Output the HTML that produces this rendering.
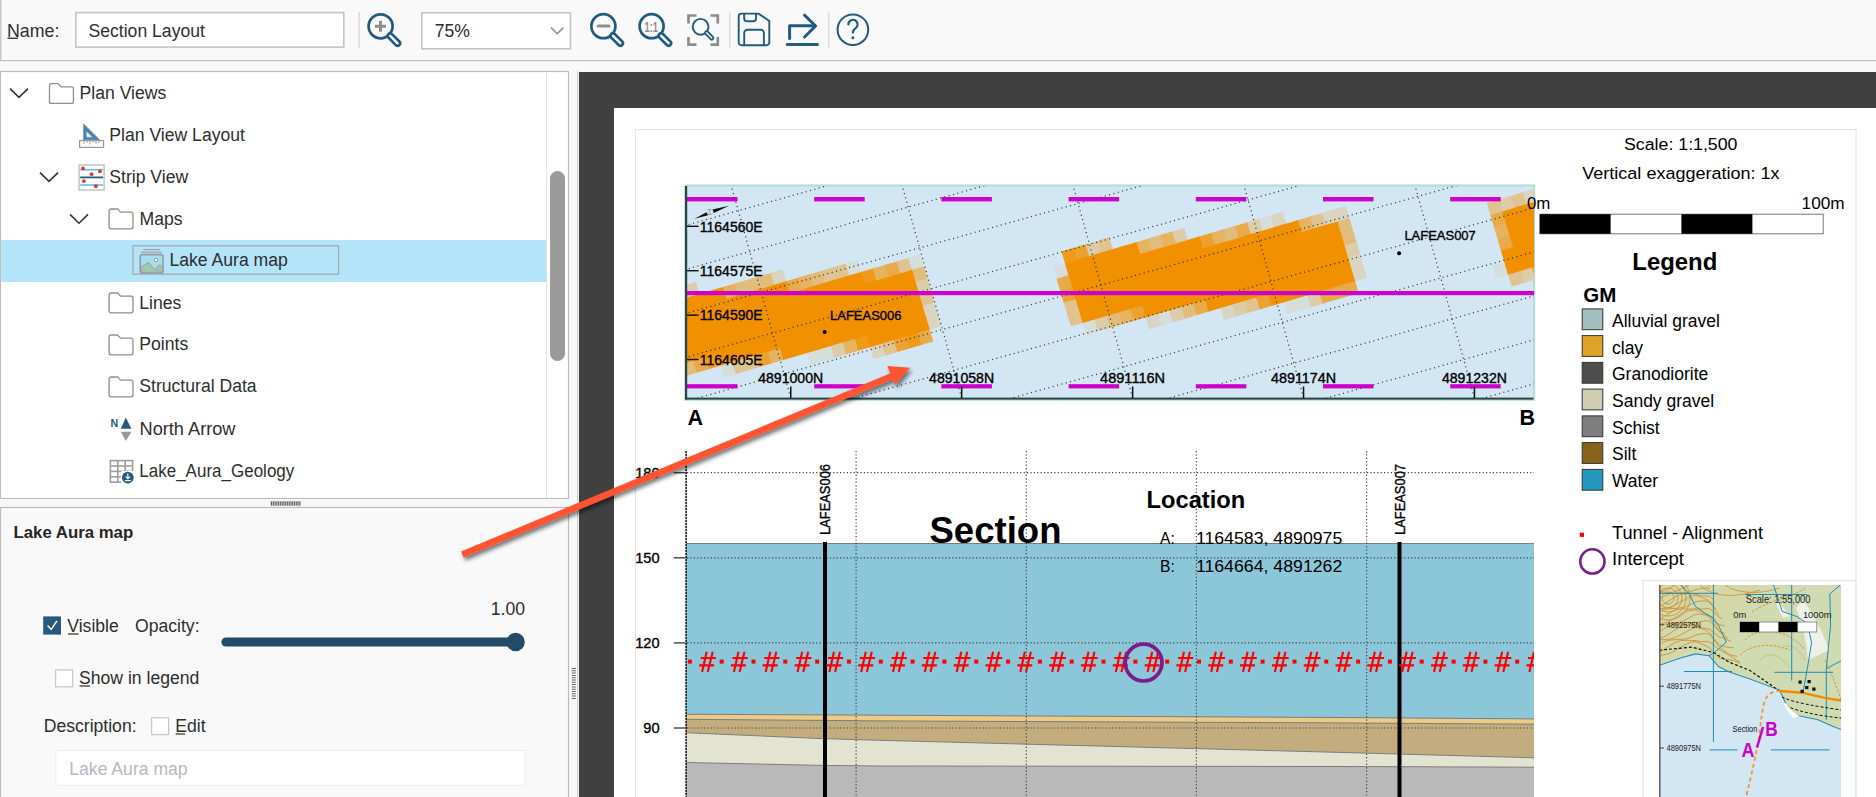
<!DOCTYPE html>
<html><head><meta charset="utf-8">
<style>
html,body{margin:0;padding:0;width:1876px;height:797px;overflow:hidden;background:#f9f9f9;}
svg{display:block;font-family:"Liberation Sans",sans-serif;}
.ui{fill:#2e2e2e;font-size:17.6px;}
.mp{fill:#000;}
.mpb{fill:#000;stroke:#000;stroke-width:0.35px;}
</style></head><body>
<svg width="1876" height="797" viewBox="0 0 1876 797">
<defs>
  <clipPath id="stripclip"><rect x="686" y="186" width="848" height="212"/></clipPath>
  <clipPath id="secclip"><rect x="686" y="451" width="848" height="346"/></clipPath>
  <clipPath id="miniclip"><rect x="1659" y="585" width="182" height="212"/></clipPath>
  <filter id="ashadow" x="-10%" y="-30%" width="130%" height="180%">
    <feGaussianBlur in="SourceAlpha" stdDeviation="2.2"/>
    <feOffset dx="2" dy="3" result="b"/>
    <feComponentTransfer><feFuncA type="linear" slope="0.55"/></feComponentTransfer>
    <feMerge><feMergeNode/><feMergeNode in="SourceGraphic"/></feMerge>
  </filter>
</defs>

<!-- ================= TOOLBAR ================= -->
<rect x="0" y="0" width="1876" height="60" fill="#f9f9f9"/>
<rect x="0" y="60" width="1876" height="1.5" fill="#c4c4c4"/>
<rect x="0" y="0" width="1.5" height="60" fill="#c8c8c8"/>
<!-- gap -->
<rect x="0" y="61.5" width="1876" height="10" fill="#f9f9f9"/>
<text x="7" y="36.5" class="ui" style="font-size:17.8px">Name:</text>
<rect x="7.5" y="37.6" width="10.5" height="1.3" fill="#2e2e2e"/>
<rect x="75.8" y="12.6" width="268" height="34.5" fill="#fff" stroke="#c4c4c4" stroke-width="1.6"/>
<text x="88.5" y="37.2" class="ui" style="font-size:17.6px">Section Layout</text>
<rect x="358.3" y="12.2" width="1.6" height="35.4" fill="#dadada"/>
<g fill="none" stroke="#215b7f" stroke-width="2.7">
  <!-- zoom in -->
  <circle cx="380.6" cy="26.3" r="12"/>
  <line x1="390.2" y1="35.9" x2="397.6" y2="43.3" stroke-width="7.6" stroke-linecap="round"/>
  <line x1="390.2" y1="35.9" x2="397.6" y2="43.3" stroke="#f9f9f9" stroke-width="2.4" stroke-linecap="round"/>
  <!-- zoom out -->
  <circle cx="603.4" cy="26.2" r="12"/>
  <line x1="613" y1="35.8" x2="620.4" y2="43.2" stroke-width="7.6" stroke-linecap="round"/>
  <line x1="613" y1="35.8" x2="620.4" y2="43.2" stroke="#f9f9f9" stroke-width="2.4" stroke-linecap="round"/>
  <!-- 1:1 -->
  <circle cx="651.6" cy="26.2" r="12"/>
  <line x1="661.2" y1="35.8" x2="668.6" y2="43.2" stroke-width="7.6" stroke-linecap="round"/>
  <line x1="661.2" y1="35.8" x2="668.6" y2="43.2" stroke="#f9f9f9" stroke-width="2.4" stroke-linecap="round"/>
  <!-- fit small -->
  <circle cx="700.6" cy="26.8" r="7.9" stroke-width="1.9"/>
  <line x1="706.6" y1="32.8" x2="711.8" y2="38" stroke-width="5" stroke-linecap="round"/>
  <line x1="706.6" y1="32.8" x2="711.8" y2="38" stroke="#f9f9f9" stroke-width="1.4" stroke-linecap="round"/>
  <!-- save -->
  <path d="M741.5 13.6 H758.6 L769.3 20.9 V42.4 a2.8 2.8 0 0 1 -2.8 2.8 H741.5 a2.8 2.8 0 0 1 -2.8 -2.8 V16.4 a2.8 2.8 0 0 1 2.8 -2.8 Z" stroke-width="1.9"/>
  <path d="M744.2 14 V18.6 a2.6 2.6 0 0 0 2.6 2.6 H753.4 a2.6 2.6 0 0 0 2.6 -2.6 V14" stroke-width="1.9"/>
  <path d="M744.2 45 V33 a3.3 3.3 0 0 1 3.3 -3.3 H760.6 a3.3 3.3 0 0 1 3.3 3.3 V45" stroke-width="1.9"/>
  <!-- export -->
  <path d="M789.6 38.4 V25.8 H814" stroke-width="3" stroke-linecap="round" stroke-linejoin="round"/>
  <path d="M804.5 15.2 L815.6 26 L804.5 37" stroke-width="3" stroke-linecap="round" stroke-linejoin="round"/>
  <line x1="787.2" y1="44.5" x2="817.4" y2="44.5" stroke-width="3" stroke-linecap="round"/>
  <!-- help -->
  <circle cx="852.9" cy="29.7" r="15.3" stroke-width="2"/>
  <path d="M848.4 24.4 a4.6 4.6 0 1 1 7.2 3.8 c-1.9 1.3 -2.6 2.2 -2.6 4.4" stroke-width="2.2" stroke-linecap="round"/>
</g>
<circle cx="852.9" cy="37.8" r="1.5" fill="#215b7f"/>
<g stroke="#8e8e8e" stroke-width="3" fill="none">
  <line x1="375" y1="26.3" x2="386" y2="26.3"/>
  <line x1="380.5" y1="20.8" x2="380.5" y2="31.8"/>
  <line x1="598" y1="26" x2="609" y2="26" stroke-linecap="round"/>
  <path d="M688.5 23.5 V15.5 H696.5 M710.5 15.5 H717.8 V23.5 M717.8 37 V44.6 H710.5 M696.5 44.6 H688.5 V37" stroke-width="2.7"/>
</g>
<text x="644.6" y="31.9" style="font-size:14px;font-weight:bold;fill:#8e8e8e" textLength="13.4" lengthAdjust="spacingAndGlyphs">1:1</text>
<rect x="421.8" y="12.8" width="148.6" height="36" fill="#fff" stroke="#c4c4c4" stroke-width="1.6"/>
<text x="434.8" y="36.8" class="ui" style="font-size:17.6px">75%</text>
<polyline points="551,27.6 557.2,33.8 563.4,27.6" fill="none" stroke="#8e8e8e" stroke-width="1.5"/>
<rect x="729" y="12.2" width="1.4" height="35.4" fill="#dadada"/>
<rect x="828" y="12.2" width="1.4" height="35.4" fill="#dadada"/>

<!-- ================= CANVAS ================= -->
<rect x="577" y="71" width="1.2" height="726" fill="#d0d0d0"/>
<rect x="579" y="72" width="1297" height="725" fill="#404040"/>
<rect x="614" y="108" width="1262" height="689" fill="#ffffff"/>
<rect x="635.5" y="129.5" width="1220.5" height="700" fill="none" stroke="#e4e4e4" stroke-width="1"/>
<g id="strip">
<rect x="684.2" y="184.4" width="851" height="216.4" fill="#b4dcdc"/>
<rect x="686" y="186.6" width="847" height="211.6" fill="#d3e6f3"/>
<g clip-path="url(#stripclip)">
<path fill="#d6dedb" d="M720.2 365.4 732.4 361.8 736.0 374.0 723.8 377.7ZM806.9 352.7 819.1 349.0 822.8 361.3 810.5 364.9ZM818.8 349.1 831.0 345.5 834.7 357.8 822.4 361.4ZM845.2 263.7 857.5 260.1 861.1 272.3 848.8 276.0ZM908.2 258.0 920.4 254.4 924.1 266.6 911.8 270.2ZM1053.1 266.8 1065.3 263.2 1068.9 275.4 1056.7 279.1ZM1082.6 322.7 1094.8 319.1 1098.4 331.4 1086.2 335.0ZM1157.4 313.5 1169.7 309.9 1173.3 322.1 1161.0 325.7ZM1258.7 218.8 1270.9 215.2 1274.6 227.5 1262.3 231.1ZM1283.4 302.1 1295.6 298.4 1299.2 310.7 1287.0 314.3ZM1295.2 298.5 1307.5 294.9 1311.1 307.2 1298.9 310.8ZM1492.5 266.0 1504.8 262.3 1508.4 274.6 1496.1 278.2Z"/>
<path fill="#d9d5c2" d="M770.4 273.0 782.6 269.3 786.2 281.6 774.0 285.2ZM869.9 346.9 882.1 343.3 885.7 355.6 873.5 359.2ZM922.3 305.6 934.5 301.9 938.1 314.2 925.9 317.8ZM925.8 317.4 938.0 313.8 941.7 326.1 929.4 329.7ZM1145.5 317.0 1157.8 313.4 1161.4 325.6 1149.2 329.3ZM1220.4 307.8 1232.6 304.2 1236.3 316.4 1224.0 320.0ZM1270.6 215.3 1282.8 211.7 1286.5 223.9 1274.2 227.6ZM1321.7 213.1 1333.9 209.5 1337.5 221.7 1325.3 225.4ZM1333.6 209.6 1345.8 206.0 1349.4 218.2 1337.2 221.8ZM1347.6 257.2 1359.9 253.5 1363.5 265.8 1351.3 269.4ZM1351.2 269.0 1363.4 265.4 1367.0 277.7 1354.8 281.3ZM1522.5 192.4 1534.7 188.8 1538.3 201.1 1526.1 204.7Z"/>
<path fill="#dcccaa" d="M669.1 367.6 681.3 364.0 685.0 376.2 672.7 379.9ZM683.6 285.7 695.9 282.1 699.5 294.3 687.2 298.0ZM830.7 345.6 842.9 342.0 846.6 354.2 834.3 357.9ZM915.2 281.8 927.5 278.1 931.1 290.4 918.9 294.0ZM1094.4 319.2 1106.7 315.6 1110.3 327.8 1098.1 331.5ZM1085.2 244.4 1097.5 240.7 1101.1 253.0 1088.8 256.6ZM1169.3 310.0 1181.5 306.3 1185.2 318.6 1172.9 322.2ZM1172.0 231.6 1184.2 228.0 1187.8 240.2 1175.6 243.8ZM1232.3 304.3 1244.5 300.6 1248.1 312.9 1235.9 316.5ZM1246.8 222.4 1259.1 218.7 1262.7 231.0 1250.4 234.6ZM1307.1 295.0 1319.4 291.4 1323.0 303.6 1310.8 307.3ZM1344.1 245.3 1356.4 241.6 1360.0 253.9 1347.7 257.5ZM1498.7 199.5 1510.9 195.9 1514.6 208.1 1502.3 211.7ZM1519.8 270.8 1532.1 267.2 1535.7 279.4 1523.4 283.1Z"/>
<path fill="#dfc492" d="M732.0 361.9 744.3 358.3 747.9 370.5 735.7 374.1ZM743.9 358.4 756.2 354.8 759.8 367.0 747.6 370.6ZM821.4 270.8 833.7 267.1 837.3 279.4 825.1 283.0ZM833.3 267.2 845.6 263.6 849.2 275.9 837.0 279.5ZM881.8 343.4 894.0 339.8 897.6 352.0 885.4 355.7ZM896.3 261.5 908.5 257.9 912.2 270.1 899.9 273.8ZM918.8 293.7 931.0 290.0 934.6 302.3 922.4 305.9ZM1063.6 302.5 1075.9 298.9 1079.5 311.1 1067.3 314.7ZM1067.1 314.4 1079.4 310.7 1083.0 323.0 1070.8 326.6ZM1097.1 240.8 1109.3 237.2 1113.0 249.5 1100.7 253.1ZM1244.2 300.7 1256.4 297.1 1260.0 309.4 1247.8 313.0ZM1309.8 216.6 1322.0 213.0 1325.7 225.3 1313.4 228.9ZM1486.8 203.0 1499.0 199.4 1502.7 211.6 1490.4 215.2ZM1507.9 274.3 1520.2 270.7 1523.8 283.0 1511.6 286.6ZM1510.6 196.0 1522.8 192.3 1526.4 204.6 1514.2 208.2Z"/>
<path fill="#e2bc7a" d="M681.0 364.1 693.2 360.5 696.8 372.7 684.6 376.3ZM734.7 283.5 746.9 279.9 750.6 292.1 738.3 295.8ZM746.6 280.0 758.8 276.4 762.5 288.6 750.2 292.2ZM758.5 276.5 770.7 272.9 774.3 285.1 762.1 288.7ZM809.6 274.3 821.8 270.7 825.4 282.9 813.2 286.5ZM911.7 269.9 924.0 266.3 927.6 278.5 915.3 282.1ZM1106.3 315.7 1118.6 312.1 1122.2 324.3 1110.0 327.9ZM1148.2 238.6 1160.4 235.0 1164.0 247.3 1151.8 250.9ZM1181.2 306.5 1193.4 302.8 1197.1 315.1 1184.8 318.7ZM1223.0 229.4 1235.3 225.8 1238.9 238.0 1226.7 241.6ZM1337.1 221.5 1349.3 217.9 1353.0 230.1 1340.7 233.7ZM1340.6 233.4 1352.8 229.7 1356.5 242.0 1344.2 245.6ZM1534.4 188.9 1546.6 185.3 1550.2 197.5 1538.0 201.2Z"/>
<path fill="#e6b361" d="M671.7 289.2 684.0 285.6 687.6 297.9 675.4 301.5ZM722.8 287.0 735.0 283.4 738.7 295.7 726.4 299.3ZM767.7 351.3 780.0 347.7 783.6 360.0 771.3 363.6ZM797.7 277.8 809.9 274.2 813.5 286.4 801.3 290.1ZM842.6 342.1 854.8 338.5 858.4 350.7 846.2 354.3ZM872.5 268.6 884.8 264.9 888.4 277.2 876.1 280.8ZM1118.2 312.2 1130.5 308.5 1134.1 320.8 1121.9 324.4ZM1136.3 242.2 1148.5 238.5 1152.2 250.8 1139.9 254.4ZM1160.1 235.1 1172.3 231.5 1175.9 243.7 1163.7 247.4ZM1211.1 232.9 1223.4 229.3 1227.0 241.5 1214.8 245.2ZM1297.9 220.2 1310.1 216.5 1313.8 228.8 1301.5 232.4ZM1493.8 226.8 1506.1 223.2 1509.7 235.4 1497.5 239.0Z"/>
<path fill="#e9aa49" d="M692.9 360.6 705.1 357.0 708.7 369.2 696.5 372.8ZM785.8 281.3 798.0 277.7 801.6 289.9 789.4 293.6ZM884.4 265.0 896.7 261.4 900.3 273.7 888.0 277.3ZM917.4 332.9 929.7 329.2 933.3 341.5 921.1 345.1ZM1056.6 278.7 1068.8 275.1 1072.5 287.3 1060.2 291.0ZM1193.1 302.9 1205.3 299.3 1209.0 311.6 1196.7 315.2ZM1234.9 225.9 1247.2 222.3 1250.8 234.5 1238.5 238.1ZM1319.0 291.5 1331.3 287.9 1334.9 300.1 1322.6 303.7ZM1330.9 288.0 1343.2 284.3 1346.8 296.6 1334.5 300.2ZM1342.8 284.5 1355.0 280.8 1358.7 293.1 1346.4 296.7ZM1490.3 214.9 1502.6 211.3 1506.2 223.5 1493.9 227.1ZM1497.4 238.7 1509.6 235.0 1513.2 247.3 1501.0 250.9Z"/>
<path fill="#eca231" d="M755.8 354.9 768.1 351.2 771.7 363.5 759.5 367.1ZM893.7 339.9 905.9 336.3 909.5 348.5 897.3 352.1ZM1060.1 290.6 1072.3 287.0 1076.0 299.2 1063.7 302.8ZM1073.3 247.9 1085.6 244.3 1089.2 256.5 1076.9 260.1ZM1130.1 308.7 1142.4 305.0 1146.0 317.3 1133.7 320.9ZM1199.3 236.4 1211.5 232.8 1215.1 245.1 1202.9 248.7ZM1256.1 297.2 1268.3 293.6 1271.9 305.8 1259.7 309.5ZM1531.7 267.3 1544.0 263.7 1547.6 275.9 1535.3 279.5Z"/>
<path fill="#ef9a18" d="M704.7 357.1 717.0 353.4 720.6 365.7 708.4 369.3ZM854.5 338.6 866.7 334.9 870.3 347.2 858.1 350.8ZM860.6 272.1 872.9 268.5 876.5 280.7 864.3 284.3ZM905.5 336.4 917.8 332.7 921.4 345.0 909.2 348.6ZM1061.4 251.4 1073.7 247.8 1077.3 260.0 1065.1 263.6Z"/>
<path fill="#f29100" d="M665.6 355.7 677.8 352.1 681.4 364.4 669.2 368.0ZM663.4 304.7 675.6 301.0 679.2 313.3 667.0 316.9ZM666.9 316.5 679.1 312.9 682.8 325.2 670.5 328.8ZM670.4 328.4 682.6 324.8 686.3 337.1 674.0 340.7ZM673.9 340.3 686.2 336.7 689.8 348.9 677.5 352.6ZM677.4 352.2 689.7 348.6 693.3 360.8 681.1 364.5ZM675.2 301.1 687.5 297.5 691.1 309.8 678.9 313.4ZM678.8 313.0 691.0 309.4 694.6 321.6 682.4 325.3ZM682.3 324.9 694.5 321.3 698.2 333.5 685.9 337.2ZM685.8 336.8 698.1 333.2 701.7 345.4 689.4 349.0ZM689.3 348.7 701.6 345.1 705.2 357.3 693.0 360.9ZM687.1 297.6 699.4 294.0 703.0 306.2 690.8 309.9ZM690.7 309.5 702.9 305.9 706.5 318.1 694.3 321.7ZM694.2 321.4 706.4 317.8 710.1 330.0 697.8 333.6ZM697.7 333.3 709.9 329.7 713.6 341.9 701.3 345.5ZM701.2 345.2 713.5 341.5 717.1 353.8 704.9 357.4ZM699.0 294.1 711.3 290.5 714.9 302.7 702.7 306.3ZM702.5 306.0 714.8 302.4 718.4 314.6 706.2 318.2ZM706.1 317.9 718.3 314.2 721.9 326.5 709.7 330.1ZM709.6 329.8 721.8 326.1 725.5 338.4 713.2 342.0ZM713.1 341.6 725.4 338.0 729.0 350.3 716.7 353.9ZM716.6 353.5 728.9 349.9 732.5 362.2 720.3 365.8ZM710.9 290.6 723.2 286.9 726.8 299.2 714.5 302.8ZM714.4 302.5 726.7 298.8 730.3 311.1 718.1 314.7ZM718.0 314.3 730.2 310.7 733.8 323.0 721.6 326.6ZM721.5 326.2 733.7 322.6 737.4 334.9 725.1 338.5ZM725.0 338.1 737.2 334.5 740.9 346.7 728.6 350.4ZM728.5 350.0 740.8 346.4 744.4 358.6 732.2 362.3ZM726.3 298.9 738.6 295.3 742.2 307.6 730.0 311.2ZM729.8 310.8 742.1 307.2 745.7 319.4 733.5 323.1ZM733.4 322.7 745.6 319.1 749.2 331.3 737.0 335.0ZM736.9 334.6 749.1 331.0 752.8 343.2 740.5 346.8ZM740.4 346.5 752.7 342.9 756.3 355.1 744.0 358.7ZM738.2 295.4 750.5 291.8 754.1 304.0 741.8 307.7ZM741.7 307.3 754.0 303.7 757.6 315.9 745.4 319.5ZM745.3 319.2 757.5 315.6 761.1 327.8 748.9 331.4ZM748.8 331.1 761.0 327.5 764.7 339.7 752.4 343.3ZM752.3 343.0 764.5 339.3 768.2 351.6 755.9 355.2ZM750.1 291.9 762.4 288.3 766.0 300.5 753.7 304.1ZM753.6 303.8 765.9 300.2 769.5 312.4 757.3 316.0ZM757.1 315.7 769.4 312.0 773.0 324.3 760.8 327.9ZM760.7 327.6 772.9 323.9 776.5 336.2 764.3 339.8ZM764.2 339.4 776.4 335.8 780.1 348.1 767.8 351.7ZM762.0 288.4 774.2 284.7 777.9 297.0 765.6 300.6ZM765.5 300.3 777.8 296.6 781.4 308.9 769.1 312.5ZM769.0 312.1 781.3 308.5 784.9 320.8 772.7 324.4ZM772.6 324.0 784.8 320.4 788.4 332.7 776.2 336.3ZM776.1 335.9 788.3 332.3 792.0 344.5 779.7 348.2ZM779.6 347.8 791.8 344.2 795.5 356.4 783.2 360.1ZM773.9 284.8 786.1 281.2 789.8 293.5 777.5 297.1ZM777.4 296.7 789.7 293.1 793.3 305.4 781.0 309.0ZM780.9 308.6 793.2 305.0 796.8 317.2 784.6 320.9ZM784.4 320.5 796.7 316.9 800.3 329.1 788.1 332.8ZM788.0 332.4 800.2 328.8 803.8 341.0 791.6 344.7ZM791.5 344.3 803.7 340.7 807.4 352.9 795.1 356.5ZM789.3 293.2 801.5 289.6 805.2 301.8 792.9 305.5ZM792.8 305.1 805.1 301.5 808.7 313.7 796.4 317.4ZM796.3 317.0 808.6 313.4 812.2 325.6 800.0 329.2ZM799.9 328.9 812.1 325.3 815.7 337.5 803.5 341.1ZM803.4 340.8 815.6 337.1 819.3 349.4 807.0 353.0ZM801.2 289.7 813.4 286.1 817.1 298.3 804.8 301.9ZM804.7 301.6 817.0 298.0 820.6 310.2 808.3 313.8ZM808.2 313.5 820.5 309.8 824.1 322.1 811.9 325.7ZM811.7 325.4 824.0 321.7 827.6 334.0 815.4 337.6ZM815.3 337.3 827.5 333.6 831.1 345.9 818.9 349.5ZM813.1 286.2 825.3 282.5 828.9 294.8 816.7 298.4ZM816.6 298.1 828.8 294.4 832.5 306.7 820.2 310.3ZM820.1 310.0 832.4 306.3 836.0 318.6 823.7 322.2ZM823.6 321.8 835.9 318.2 839.5 330.5 827.3 334.1ZM827.2 333.7 839.4 330.1 843.0 342.3 830.8 346.0ZM825.0 282.6 837.2 279.0 840.8 291.3 828.6 294.9ZM828.5 294.5 840.7 290.9 844.4 303.2 832.1 306.8ZM832.0 306.4 844.3 302.8 847.9 315.0 835.6 318.7ZM835.5 318.3 847.8 314.7 851.4 326.9 839.2 330.6ZM839.0 330.2 851.3 326.6 854.9 338.8 842.7 342.5ZM836.9 279.1 849.1 275.5 852.7 287.7 840.5 291.4ZM840.4 291.0 852.6 287.4 856.2 299.6 844.0 303.3ZM843.9 302.9 856.1 299.3 859.8 311.5 847.5 315.2ZM847.4 314.8 859.7 311.2 863.3 323.4 851.0 327.0ZM850.9 326.7 863.2 323.1 866.8 335.3 854.6 338.9ZM848.7 275.6 861.0 272.0 864.6 284.2 852.4 287.9ZM852.3 287.5 864.5 283.9 868.1 296.1 855.9 299.7ZM855.8 299.4 868.0 295.8 871.7 308.0 859.4 311.6ZM859.3 311.3 871.6 307.6 875.2 319.9 862.9 323.5ZM862.8 323.2 875.1 319.5 878.7 331.8 866.5 335.4ZM866.4 335.1 878.6 331.4 882.2 343.7 870.0 347.3ZM864.2 284.0 876.4 280.3 880.0 292.6 867.8 296.2ZM867.7 295.9 879.9 292.2 883.5 304.5 871.3 308.1ZM871.2 307.8 883.4 304.1 887.1 316.4 874.8 320.0ZM874.7 319.6 887.0 316.0 890.6 328.3 878.3 331.9ZM878.2 331.5 890.5 327.9 894.1 340.1 881.9 343.8ZM876.0 280.5 888.3 276.8 891.9 289.1 879.7 292.7ZM879.6 292.3 891.8 288.7 895.4 301.0 883.2 304.6ZM883.1 304.2 895.3 300.6 899.0 312.8 886.7 316.5ZM886.6 316.1 898.9 312.5 902.5 324.7 890.2 328.4ZM890.1 328.0 902.4 324.4 906.0 336.6 893.8 340.3ZM887.9 276.9 900.2 273.3 903.8 285.5 891.6 289.2ZM891.5 288.8 903.7 285.2 907.3 297.4 895.1 301.1ZM895.0 300.7 907.2 297.1 910.8 309.3 898.6 313.0ZM898.5 312.6 910.7 309.0 914.4 321.2 902.1 324.8ZM902.0 324.5 914.3 320.9 917.9 333.1 905.6 336.7ZM899.8 273.4 912.1 269.8 915.7 282.0 903.4 285.7ZM903.3 285.3 915.6 281.7 919.2 293.9 907.0 297.5ZM906.9 297.2 919.1 293.6 922.7 305.8 910.5 309.4ZM910.4 309.1 922.6 305.4 926.3 317.7 914.0 321.3ZM913.9 321.0 926.2 317.3 929.8 329.6 917.5 333.2ZM1064.9 263.3 1077.2 259.7 1080.8 271.9 1068.6 275.5ZM1068.5 275.2 1080.7 271.6 1084.3 283.8 1072.1 287.4ZM1072.0 287.1 1084.2 283.4 1087.9 295.7 1075.6 299.3ZM1075.5 299.0 1087.8 295.3 1091.4 307.6 1079.1 311.2ZM1079.0 310.9 1091.3 307.2 1094.9 319.5 1082.7 323.1ZM1076.8 259.8 1089.1 256.1 1092.7 268.4 1080.5 272.0ZM1080.4 271.7 1092.6 268.0 1096.2 280.3 1084.0 283.9ZM1083.9 283.6 1096.1 279.9 1099.8 292.2 1087.5 295.8ZM1087.4 295.4 1099.6 291.8 1103.3 304.1 1091.0 307.7ZM1090.9 307.3 1103.2 303.7 1106.8 315.9 1094.6 319.6ZM1088.7 256.2 1101.0 252.6 1104.6 264.9 1092.4 268.5ZM1092.2 268.1 1104.5 264.5 1108.1 276.8 1095.9 280.4ZM1095.8 280.0 1108.0 276.4 1111.6 288.6 1099.4 292.3ZM1099.3 291.9 1111.5 288.3 1115.2 300.5 1102.9 304.2ZM1102.8 303.8 1115.1 300.2 1118.7 312.4 1106.4 316.1ZM1100.6 252.7 1112.9 249.1 1116.5 261.3 1104.2 265.0ZM1104.1 264.6 1116.4 261.0 1120.0 273.2 1107.8 276.9ZM1107.7 276.5 1119.9 272.9 1123.5 285.1 1111.3 288.8ZM1111.2 288.4 1123.4 284.8 1127.1 297.0 1114.8 300.6ZM1114.7 300.3 1126.9 296.7 1130.6 308.9 1118.3 312.5ZM1112.5 249.2 1124.8 245.6 1128.4 257.8 1116.1 261.5ZM1116.0 261.1 1128.3 257.5 1131.9 269.7 1119.7 273.3ZM1119.5 273.0 1131.8 269.4 1135.4 281.6 1123.2 285.2ZM1123.1 284.9 1135.3 281.2 1138.9 293.5 1126.7 297.1ZM1126.6 296.8 1138.8 293.1 1142.5 305.4 1130.2 309.0ZM1124.4 245.7 1136.6 242.1 1140.3 254.3 1128.0 257.9ZM1127.9 257.6 1140.2 253.9 1143.8 266.2 1131.5 269.8ZM1131.4 269.5 1143.7 265.8 1147.3 278.1 1135.1 281.7ZM1135.0 281.4 1147.2 277.7 1150.8 290.0 1138.6 293.6ZM1138.5 293.2 1150.7 289.6 1154.4 301.9 1142.1 305.5ZM1142.0 305.1 1154.2 301.5 1157.9 313.7 1145.6 317.4ZM1139.8 254.1 1152.1 250.4 1155.7 262.7 1143.4 266.3ZM1143.3 265.9 1155.6 262.3 1159.2 274.6 1147.0 278.2ZM1146.8 277.8 1159.1 274.2 1162.7 286.4 1150.5 290.1ZM1150.4 289.7 1162.6 286.1 1166.2 298.3 1154.0 302.0ZM1153.9 301.6 1166.1 298.0 1169.8 310.2 1157.5 313.9ZM1151.7 250.5 1163.9 246.9 1167.6 259.1 1155.3 262.8ZM1155.2 262.4 1167.5 258.8 1171.1 271.0 1158.8 274.7ZM1158.7 274.3 1171.0 270.7 1174.6 282.9 1162.4 286.6ZM1162.3 286.2 1174.5 282.6 1178.1 294.8 1165.9 298.4ZM1165.8 298.1 1178.0 294.5 1181.7 306.7 1169.4 310.3ZM1163.6 247.0 1175.8 243.4 1179.5 255.6 1167.2 259.3ZM1167.1 258.9 1179.4 255.3 1183.0 267.5 1170.7 271.1ZM1170.6 270.8 1182.9 267.2 1186.5 279.4 1174.3 283.0ZM1174.1 282.7 1186.4 279.0 1190.0 291.3 1177.8 294.9ZM1177.7 294.6 1189.9 290.9 1193.5 303.2 1181.3 306.8ZM1175.5 243.5 1187.7 239.9 1191.3 252.1 1179.1 255.7ZM1179.0 255.4 1191.2 251.7 1194.9 264.0 1182.6 267.6ZM1182.5 267.3 1194.8 263.6 1198.4 275.9 1186.1 279.5ZM1186.0 279.2 1198.3 275.5 1201.9 287.8 1189.7 291.4ZM1189.6 291.0 1201.8 287.4 1205.4 299.7 1193.2 303.3ZM1187.4 240.0 1199.6 236.3 1203.2 248.6 1191.0 252.2ZM1190.9 251.9 1203.1 248.2 1206.8 260.5 1194.5 264.1ZM1194.4 263.7 1206.7 260.1 1210.3 272.4 1198.0 276.0ZM1197.9 275.6 1210.2 272.0 1213.8 284.3 1201.6 287.9ZM1201.5 287.5 1213.7 283.9 1217.3 296.1 1205.1 299.8ZM1205.0 299.4 1217.2 295.8 1220.8 308.0 1208.6 311.7ZM1202.8 248.3 1215.0 244.7 1218.6 257.0 1206.4 260.6ZM1206.3 260.2 1218.5 256.6 1222.2 268.8 1209.9 272.5ZM1209.8 272.1 1222.1 268.5 1225.7 280.7 1213.4 284.4ZM1213.3 284.0 1225.6 280.4 1229.2 292.6 1217.0 296.2ZM1216.9 295.9 1229.1 292.3 1232.7 304.5 1220.5 308.1ZM1214.7 244.8 1226.9 241.2 1230.5 253.4 1218.3 257.1ZM1218.2 256.7 1230.4 253.1 1234.1 265.3 1221.8 268.9ZM1221.7 268.6 1234.0 265.0 1237.6 277.2 1225.3 280.8ZM1225.2 280.5 1237.5 276.9 1241.1 289.1 1228.9 292.7ZM1228.8 292.4 1241.0 288.7 1244.6 301.0 1232.4 304.6ZM1226.6 241.3 1238.8 237.7 1242.4 249.9 1230.2 253.5ZM1230.1 253.2 1242.3 249.6 1245.9 261.8 1233.7 265.4ZM1233.6 265.1 1245.8 261.4 1249.5 273.7 1237.2 277.3ZM1237.1 277.0 1249.4 273.3 1253.0 285.6 1240.7 289.2ZM1240.6 288.8 1252.9 285.2 1256.5 297.5 1244.3 301.1ZM1238.4 237.8 1250.7 234.1 1254.3 246.4 1242.1 250.0ZM1242.0 249.7 1254.2 246.0 1257.8 258.3 1245.6 261.9ZM1245.5 261.5 1257.7 257.9 1261.4 270.2 1249.1 273.8ZM1249.0 273.4 1261.3 269.8 1264.9 282.1 1252.6 285.7ZM1252.5 285.3 1264.8 281.7 1268.4 293.9 1256.2 297.6ZM1250.3 234.2 1262.6 230.6 1266.2 242.9 1254.0 246.5ZM1253.9 246.1 1266.1 242.5 1269.7 254.8 1257.5 258.4ZM1257.4 258.0 1269.6 254.4 1273.2 266.6 1261.0 270.3ZM1260.9 269.9 1273.1 266.3 1276.8 278.5 1264.5 282.2ZM1264.4 281.8 1276.7 278.2 1280.3 290.4 1268.0 294.0ZM1267.9 293.7 1280.2 290.1 1283.8 302.3 1271.6 305.9ZM1262.2 230.7 1274.5 227.1 1278.1 239.3 1265.8 243.0ZM1265.7 242.6 1278.0 239.0 1281.6 251.2 1269.4 254.9ZM1269.3 254.5 1281.5 250.9 1285.1 263.1 1272.9 266.7ZM1272.8 266.4 1285.0 262.8 1288.7 275.0 1276.4 278.6ZM1276.3 278.3 1288.6 274.7 1292.2 286.9 1279.9 290.5ZM1279.8 290.2 1292.1 286.5 1295.7 298.8 1283.5 302.4ZM1274.1 227.2 1286.4 223.6 1290.0 235.8 1277.7 239.4ZM1277.6 239.1 1289.9 235.5 1293.5 247.7 1281.3 251.3ZM1281.2 251.0 1293.4 247.4 1297.0 259.6 1284.8 263.2ZM1284.7 262.9 1296.9 259.2 1300.5 271.5 1288.3 275.1ZM1288.2 274.8 1300.4 271.1 1304.1 283.4 1291.8 287.0ZM1291.7 286.6 1304.0 283.0 1307.6 295.3 1295.3 298.9ZM1286.0 223.7 1298.2 220.1 1301.9 232.3 1289.6 235.9ZM1289.5 235.6 1301.8 231.9 1305.4 244.2 1293.1 247.8ZM1293.0 247.5 1305.3 243.8 1308.9 256.1 1296.7 259.7ZM1296.6 259.3 1308.8 255.7 1312.4 268.0 1300.2 271.6ZM1300.1 271.2 1312.3 267.6 1316.0 279.9 1303.7 283.5ZM1303.6 283.1 1315.9 279.5 1319.5 291.7 1307.2 295.4ZM1301.4 232.0 1313.7 228.4 1317.3 240.7 1305.0 244.3ZM1304.9 243.9 1317.2 240.3 1320.8 252.6 1308.6 256.2ZM1308.5 255.8 1320.7 252.2 1324.3 264.4 1312.1 268.1ZM1312.0 267.7 1324.2 264.1 1327.8 276.3 1315.6 280.0ZM1315.5 279.6 1327.7 276.0 1331.4 288.2 1319.1 291.9ZM1313.3 228.5 1325.5 224.9 1329.2 237.1 1316.9 240.8ZM1316.8 240.4 1329.1 236.8 1332.7 249.0 1320.4 252.7ZM1320.3 252.3 1332.6 248.7 1336.2 260.9 1324.0 264.6ZM1323.9 264.2 1336.1 260.6 1339.7 272.8 1327.5 276.4ZM1327.4 276.1 1339.6 272.5 1343.3 284.7 1331.0 288.3ZM1325.2 225.0 1337.4 221.4 1341.1 233.6 1328.8 237.2ZM1328.7 236.9 1341.0 233.3 1344.6 245.5 1332.3 249.1ZM1332.2 248.8 1344.5 245.2 1348.1 257.4 1335.9 261.0ZM1335.8 260.7 1348.0 257.0 1351.6 269.3 1339.4 272.9ZM1339.3 272.6 1351.5 268.9 1355.2 281.2 1342.9 284.8ZM1500.9 250.6 1513.1 246.9 1516.8 259.2 1504.5 262.8ZM1504.4 262.4 1516.6 258.8 1520.3 271.1 1508.0 274.7ZM1502.2 211.4 1514.5 207.7 1518.1 220.0 1505.8 223.6ZM1505.7 223.3 1518.0 219.6 1521.6 231.9 1509.4 235.5ZM1509.2 235.1 1521.5 231.5 1525.1 243.8 1512.9 247.4ZM1512.8 247.0 1525.0 243.4 1528.6 255.7 1516.4 259.3ZM1516.3 258.9 1528.5 255.3 1532.2 267.5 1519.9 271.2ZM1514.1 207.8 1526.3 204.2 1530.0 216.5 1517.7 220.1ZM1517.6 219.7 1529.9 216.1 1533.5 228.4 1521.2 232.0ZM1521.1 231.6 1533.4 228.0 1537.0 240.2 1524.8 243.9ZM1524.7 243.5 1536.9 239.9 1540.5 252.1 1528.3 255.8ZM1528.2 255.4 1540.4 251.8 1544.1 264.0 1531.8 267.6ZM1526.0 204.3 1538.2 200.7 1541.9 212.9 1529.6 216.6ZM1529.5 216.2 1541.8 212.6 1545.4 224.8 1533.1 228.5ZM1533.0 228.1 1545.3 224.5 1548.9 236.7 1536.7 240.3ZM1536.6 240.0 1548.8 236.4 1552.4 248.6 1540.2 252.2ZM1540.1 251.9 1552.3 248.3 1555.9 260.5 1543.7 264.1ZM1537.9 200.8 1550.1 197.2 1553.7 209.4 1541.5 213.0ZM1541.4 212.7 1553.6 209.1 1557.3 221.3 1545.0 224.9Z"/>
<g stroke="#222" stroke-width="1.3" stroke-dasharray="1.1 3.4" fill="none" opacity="0.85">
<line x1="680" y1="139.0" x2="1540" y2="-101.8"/>
<line x1="680" y1="183.0" x2="1540" y2="-57.8"/>
<line x1="680" y1="227.0" x2="1540" y2="-13.8"/>
<line x1="680" y1="271.0" x2="1540" y2="30.2"/>
<line x1="680" y1="315.0" x2="1540" y2="74.2"/>
<line x1="680" y1="359.0" x2="1540" y2="118.2"/>
<line x1="680" y1="403.0" x2="1540" y2="162.2"/>
<line x1="680" y1="447.0" x2="1540" y2="206.2"/>
<line x1="680" y1="491.0" x2="1540" y2="250.2"/>
<line x1="680" y1="535.0" x2="1540" y2="294.2"/>
<line x1="680" y1="579.0" x2="1540" y2="338.2"/>
<line x1="680" y1="623.0" x2="1540" y2="382.2"/>
<line x1="680" y1="667.0" x2="1540" y2="426.2"/>
<line x1="558.7" y1="180" x2="621.7" y2="405"/>
<line x1="729.7" y1="180" x2="792.7" y2="405"/>
<line x1="900.6" y1="180" x2="963.6" y2="405"/>
<line x1="1071.5" y1="180" x2="1134.5" y2="405"/>
<line x1="1242.5" y1="180" x2="1305.5" y2="405"/>
<line x1="1413.4" y1="180" x2="1476.4" y2="405"/>
<line x1="1584.3" y1="180" x2="1647.3" y2="405"/>
</g>
<g fill="#cc00cc">
<rect x="686" y="291" width="848" height="4.2"/>
<rect x="687.0" y="197" width="50.5" height="4.4"/>
<rect x="687.0" y="384.2" width="50.5" height="4.2"/>
<rect x="814.2" y="197" width="50.5" height="4.4"/>
<rect x="814.2" y="384.2" width="50.5" height="4.2"/>
<rect x="941.4" y="197" width="50.5" height="4.4"/>
<rect x="941.4" y="384.2" width="50.5" height="4.2"/>
<rect x="1068.6" y="197" width="50.5" height="4.4"/>
<rect x="1068.6" y="384.2" width="50.5" height="4.2"/>
<rect x="1195.8" y="197" width="50.5" height="4.4"/>
<rect x="1195.8" y="384.2" width="50.5" height="4.2"/>
<rect x="1323.0" y="197" width="50.5" height="4.4"/>
<rect x="1323.0" y="384.2" width="50.5" height="4.2"/>
<rect x="1450.2" y="197" width="50.5" height="4.4"/>
<rect x="1450.2" y="384.2" width="50.5" height="4.2"/>
</g>
</g>
<rect x="685" y="186" width="2.2" height="213.4" fill="#2e4444"/>
<rect x="685" y="397.6" width="848.5" height="2" fill="#2e4444"/>
<rect x="687" y="225.6" width="11.6" height="1.4" fill="#111"/>
<text x="699.8" y="231.6" class="mpb" style="font-size:14.2px" textLength="62.8" lengthAdjust="spacingAndGlyphs">1164560E</text>
<rect x="687" y="270.0" width="11.6" height="1.4" fill="#111"/>
<text x="699.8" y="276.0" class="mpb" style="font-size:14.2px" textLength="62.8" lengthAdjust="spacingAndGlyphs">1164575E</text>
<rect x="687" y="314.4" width="11.6" height="1.4" fill="#111"/>
<text x="699.8" y="320.4" class="mpb" style="font-size:14.2px" textLength="62.8" lengthAdjust="spacingAndGlyphs">1164590E</text>
<rect x="687" y="358.8" width="11.6" height="1.4" fill="#111"/>
<text x="699.8" y="364.8" class="mpb" style="font-size:14.2px" textLength="62.8" lengthAdjust="spacingAndGlyphs">1164605E</text>
<rect x="790.0" y="386.5" width="1.5" height="11.5" fill="#111"/>
<text x="790.7" y="382.6" text-anchor="middle" class="mpb" style="font-size:14.2px" textLength="65" lengthAdjust="spacingAndGlyphs">4891000N</text>
<rect x="960.9" y="386.5" width="1.5" height="11.5" fill="#111"/>
<text x="961.6" y="382.6" text-anchor="middle" class="mpb" style="font-size:14.2px" textLength="65" lengthAdjust="spacingAndGlyphs">4891058N</text>
<rect x="1131.9" y="386.5" width="1.5" height="11.5" fill="#111"/>
<text x="1132.6" y="382.6" text-anchor="middle" class="mpb" style="font-size:14.2px" textLength="65" lengthAdjust="spacingAndGlyphs">4891116N</text>
<rect x="1302.8" y="386.5" width="1.5" height="11.5" fill="#111"/>
<text x="1303.5" y="382.6" text-anchor="middle" class="mpb" style="font-size:14.2px" textLength="65" lengthAdjust="spacingAndGlyphs">4891174N</text>
<rect x="1473.7" y="386.5" width="1.5" height="11.5" fill="#111"/>
<text x="1474.4" y="382.6" text-anchor="middle" class="mpb" style="font-size:14.2px" textLength="65" lengthAdjust="spacingAndGlyphs">4891232N</text>
<circle cx="824.7" cy="331.9" r="2" fill="#000"/>
<text x="830" y="319.7" class="mpb" style="font-size:13.4px" textLength="71.5" lengthAdjust="spacingAndGlyphs">LAFEAS006</text>
<circle cx="1399.1" cy="253.2" r="2" fill="#000"/>
<text x="1404.4" y="240.4" class="mpb" style="font-size:13.4px" textLength="71.4" lengthAdjust="spacingAndGlyphs">LAFEAS007</text>
<path d="M694.5 218.8 L706.5 212.2 L708 215.3 Z" fill="#111"/>
<path d="M712.5 209.6 L729 205.8 L713.8 213 Z" fill="#111"/>
<text x="707" y="214.5" style="font-size:8px;fill:#888" transform="rotate(-16 710 211)">Z</text>
<text x="687.4" y="425" class="mp" style="font-size:21.5px;font-weight:bold">A</text>
<text x="1519.6" y="424.7" class="mp" style="font-size:21.5px;font-weight:bold">B</text>
</g>
<g id="section">
<rect x="686" y="543.5" width="848" height="254" fill="#b9b9b9"/>
<polygon points="686,543.5 1534,543.5 1534,718.9 1340,717.5 880,715.2 686,714.2" fill="#8bc6d9"/>
<polygon points="686,714.2 880,715.2 1340,717.5 1534,718.9 1534,724.2 1340,722.9 880,720.9 686,719.3" fill="#ebcb85"/>
<polygon points="686,719.3 880,720.9 1340,722.9 1534,724.2 1534,757.8 1340,752.4 880,740.3 822,738.6 686,732.7" fill="#c3ad7f"/>
<polygon points="686,732.7 822,738.6 880,740.3 1340,752.4 1534,757.8 1534,767.2 1340,766.5 880,766 822,765.4 686,762.5" fill="#e3e3d1"/>
<polyline points="686,543.5 1534,543.5" fill="none" stroke="#7d7d7d" stroke-width="1"/>
<polyline points="686,714.2 880,715.2 1340,717.5 1534,718.9" fill="none" stroke="#7d7d7d" stroke-width="1"/>
<polyline points="686,719.3 880,720.9 1340,722.9 1534,724.2" fill="none" stroke="#7d7d7d" stroke-width="1"/>
<polyline points="686,732.7 822,738.6 880,740.3 1340,752.4 1534,757.8" fill="none" stroke="#7d7d7d" stroke-width="1"/>
<polyline points="686,762.5 822,765.4 880,766 1340,766.5 1534,767.2" fill="none" stroke="#7d7d7d" stroke-width="1"/>
<g stroke="#444" stroke-width="1.2" stroke-dasharray="1.2 2.2" fill="none">
<line x1="687" y1="472.7" x2="1534" y2="472.7"/>
<line x1="687" y1="557.8" x2="1534" y2="557.8"/>
<line x1="687" y1="642.9" x2="1534" y2="642.9"/>
<line x1="687" y1="728" x2="1534" y2="728"/>
<line x1="856.1" y1="451" x2="856.1" y2="797"/>
<line x1="1026.3" y1="451" x2="1026.3" y2="797"/>
<line x1="1196.4" y1="451" x2="1196.4" y2="797"/>
<line x1="1366.6" y1="451" x2="1366.6" y2="797"/>
</g>
<line x1="686.1" y1="451" x2="686.1" y2="797" stroke="#111" stroke-width="1.5" stroke-dasharray="2.2 0.8"/>
<rect x="673.7" y="472.0" width="12" height="1.4" fill="#444"/>
<text x="659.6" y="478.2" text-anchor="end" class="mpb" style="font-size:14.6px">180</text>
<rect x="673.7" y="557.0999999999999" width="12" height="1.4" fill="#444"/>
<text x="659.6" y="563.2" text-anchor="end" class="mpb" style="font-size:14.6px">150</text>
<rect x="673.7" y="642.1999999999999" width="12" height="1.4" fill="#444"/>
<text x="659.6" y="648.3" text-anchor="end" class="mpb" style="font-size:14.6px">120</text>
<rect x="673.7" y="727.3" width="12" height="1.4" fill="#444"/>
<text x="659.6" y="733.4" text-anchor="end" class="mpb" style="font-size:14.6px">90</text>
<rect x="823" y="542" width="4" height="255" fill="#000"/>
<rect x="1397.5" y="542" width="4" height="255" fill="#000"/>
<text transform="translate(830.2 535) rotate(-90)" class="mpb" style="font-size:14.8px" textLength="71" lengthAdjust="spacingAndGlyphs">LAFEAS006</text>
<text transform="translate(1405.2 535) rotate(-90)" class="mpb" style="font-size:14.8px" textLength="71" lengthAdjust="spacingAndGlyphs">LAFEAS007</text>
<text x="929.5" y="542.6" class="mp" style="font-size:36.5px;font-weight:bold" textLength="132" lengthAdjust="spacingAndGlyphs">Section</text>
<text x="1146.6" y="508" class="mp" style="font-size:23.8px;font-weight:bold" textLength="98.6" lengthAdjust="spacingAndGlyphs">Location</text>
<text x="1160.1" y="543.5" class="mp" style="font-size:15.6px">A:</text>
<text x="1195.9" y="543.5" class="mp" style="font-size:15.6px" textLength="146.4" lengthAdjust="spacingAndGlyphs">1164583, 4890975</text>
<text x="1160.1" y="572.3" class="mp" style="font-size:15.6px">B:</text>
<text x="1195.9" y="572.3" class="mp" style="font-size:15.6px" textLength="146.4" lengthAdjust="spacingAndGlyphs">1164664, 4891262</text>
<g clip-path="url(#secclip)">
<g stroke="#ff0000" stroke-width="2.1" fill="none">
<path d="M670.3 672.1L674.9 651.7M676.0 672.1L680.9 651.7M668.9 658.0H684.1M667.3 665.4H682.3M702.1 672.1L706.7 651.7M707.8 672.1L712.7 651.7M700.7 658.0H715.9M699.1 665.4H714.1M733.9 672.1L738.5 651.7M739.6 672.1L744.5 651.7M732.5 658.0H747.7M730.9 665.4H745.9M765.7 672.1L770.3 651.7M771.4 672.1L776.3 651.7M764.3 658.0H779.5M762.7 665.4H777.7M797.6 672.1L802.2 651.7M803.3 672.1L808.2 651.7M796.2 658.0H811.4M794.6 665.4H809.6M829.4 672.1L834.0 651.7M835.1 672.1L840.0 651.7M828.0 658.0H843.2M826.4 665.4H841.4M861.2 672.1L865.8 651.7M866.9 672.1L871.8 651.7M859.8 658.0H875.0M858.2 665.4H873.2M893.0 672.1L897.6 651.7M898.7 672.1L903.6 651.7M891.6 658.0H906.8M890.0 665.4H905.0M924.8 672.1L929.4 651.7M930.5 672.1L935.4 651.7M923.4 658.0H938.6M921.8 665.4H936.8M956.7 672.1L961.3 651.7M962.4 672.1L967.3 651.7M955.3 658.0H970.5M953.7 665.4H968.7M988.5 672.1L993.1 651.7M994.2 672.1L999.1 651.7M987.1 658.0H1002.3M985.5 665.4H1000.5M1020.3 672.1L1024.9 651.7M1026.0 672.1L1030.9 651.7M1018.9 658.0H1034.1M1017.3 665.4H1032.3M1052.1 672.1L1056.7 651.7M1057.8 672.1L1062.7 651.7M1050.7 658.0H1065.9M1049.1 665.4H1064.1M1083.9 672.1L1088.5 651.7M1089.6 672.1L1094.5 651.7M1082.5 658.0H1097.7M1080.9 665.4H1095.9M1115.8 672.1L1120.4 651.7M1121.5 672.1L1126.4 651.7M1114.4 658.0H1129.6M1112.8 665.4H1127.8M1147.6 672.1L1152.2 651.7M1153.3 672.1L1158.2 651.7M1146.2 658.0H1161.4M1144.6 665.4H1159.6M1179.4 672.1L1184.0 651.7M1185.1 672.1L1190.0 651.7M1178.0 658.0H1193.2M1176.4 665.4H1191.4M1211.2 672.1L1215.8 651.7M1216.9 672.1L1221.8 651.7M1209.8 658.0H1225.0M1208.2 665.4H1223.2M1243.0 672.1L1247.6 651.7M1248.7 672.1L1253.6 651.7M1241.6 658.0H1256.8M1240.0 665.4H1255.0M1274.9 672.1L1279.5 651.7M1280.6 672.1L1285.5 651.7M1273.5 658.0H1288.7M1271.9 665.4H1286.9M1306.7 672.1L1311.3 651.7M1312.4 672.1L1317.3 651.7M1305.3 658.0H1320.5M1303.7 665.4H1318.7M1338.5 672.1L1343.1 651.7M1344.2 672.1L1349.1 651.7M1337.1 658.0H1352.3M1335.5 665.4H1350.5M1370.3 672.1L1374.9 651.7M1376.0 672.1L1380.9 651.7M1368.9 658.0H1384.1M1367.3 665.4H1382.3M1402.1 672.1L1406.7 651.7M1407.8 672.1L1412.7 651.7M1400.7 658.0H1415.9M1399.1 665.4H1414.1M1434.0 672.1L1438.6 651.7M1439.7 672.1L1444.6 651.7M1432.6 658.0H1447.8M1431.0 665.4H1446.0M1465.8 672.1L1470.4 651.7M1471.5 672.1L1476.4 651.7M1464.4 658.0H1479.6M1462.8 665.4H1477.8M1497.6 672.1L1502.2 651.7M1503.3 672.1L1508.2 651.7M1496.2 658.0H1511.4M1494.6 665.4H1509.6M1529.4 672.1L1534.0 651.7M1535.1 672.1L1540.0 651.7M1528.0 658.0H1543.2M1526.4 665.4H1541.4M1561.2 672.1L1565.8 651.7M1566.9 672.1L1571.8 651.7M1559.8 658.0H1575.0M1558.2 665.4H1573.2"/>
</g>
<g fill="#ff0000">
<rect x="687.9" y="659.6" width="4" height="4"/>
<rect x="719.7" y="659.6" width="4" height="4"/>
<rect x="751.5" y="659.6" width="4" height="4"/>
<rect x="783.3" y="659.6" width="4" height="4"/>
<rect x="815.2" y="659.6" width="4" height="4"/>
<rect x="847.0" y="659.6" width="4" height="4"/>
<rect x="878.8" y="659.6" width="4" height="4"/>
<rect x="910.6" y="659.6" width="4" height="4"/>
<rect x="942.4" y="659.6" width="4" height="4"/>
<rect x="974.3" y="659.6" width="4" height="4"/>
<rect x="1006.1" y="659.6" width="4" height="4"/>
<rect x="1037.9" y="659.6" width="4" height="4"/>
<rect x="1069.7" y="659.6" width="4" height="4"/>
<rect x="1101.5" y="659.6" width="4" height="4"/>
<rect x="1133.4" y="659.6" width="4" height="4"/>
<rect x="1165.2" y="659.6" width="4" height="4"/>
<rect x="1197.0" y="659.6" width="4" height="4"/>
<rect x="1228.8" y="659.6" width="4" height="4"/>
<rect x="1260.6" y="659.6" width="4" height="4"/>
<rect x="1292.5" y="659.6" width="4" height="4"/>
<rect x="1324.3" y="659.6" width="4" height="4"/>
<rect x="1356.1" y="659.6" width="4" height="4"/>
<rect x="1387.9" y="659.6" width="4" height="4"/>
<rect x="1419.7" y="659.6" width="4" height="4"/>
<rect x="1451.6" y="659.6" width="4" height="4"/>
<rect x="1483.4" y="659.6" width="4" height="4"/>
<rect x="1515.2" y="659.6" width="4" height="4"/>
<rect x="1547.0" y="659.6" width="4" height="4"/>
<rect x="1578.8" y="659.6" width="4" height="4"/>
</g></g>
<circle cx="1143.6" cy="662.6" r="18.4" fill="none" stroke="#7b1c8c" stroke-width="3.7"/>
</g>
<g id="legend">
<text x="1624" y="149.8" class="mp" style="font-size:17.4px" textLength="113.5" lengthAdjust="spacingAndGlyphs">Scale: 1:1,500</text>
<text x="1582.3" y="178.7" class="mp" style="font-size:17.4px" textLength="197.3" lengthAdjust="spacingAndGlyphs">Vertical exaggeration: 1x</text>
<text x="1527" y="208.5" class="mp" style="font-size:16.4px" textLength="23.4" lengthAdjust="spacingAndGlyphs">0m</text>
<text x="1801.6" y="208.5" class="mp" style="font-size:16.4px" textLength="43.1" lengthAdjust="spacingAndGlyphs">100m</text>
<rect x="1539.8" y="214.2" width="283.4" height="19.6" fill="#fff" stroke="#777" stroke-width="1"/>
<rect x="1539.8" y="214.2" width="70.8" height="19.6" fill="#000"/>
<rect x="1681.4" y="214.2" width="71" height="19.6" fill="#000"/>
<text x="1632.3" y="269.6" class="mp" style="font-size:24.6px;font-weight:bold" textLength="85" lengthAdjust="spacingAndGlyphs">Legend</text>
<text x="1583.3" y="302.2" class="mp" style="font-size:20.2px;font-weight:bold" textLength="33.1" lengthAdjust="spacingAndGlyphs">GM</text>
<rect x="1582.2" y="308.9" width="20.6" height="20.8" fill="#a3bfbf" stroke="#333" stroke-width="1"/>
<text x="1612" y="326.8" class="mp" style="font-size:17.5px">Alluvial gravel</text>
<rect x="1582.2" y="335.6" width="20.6" height="20.8" fill="#dfa425" stroke="#333" stroke-width="1"/>
<text x="1612" y="353.5" class="mp" style="font-size:17.5px">clay</text>
<rect x="1582.2" y="362.4" width="20.6" height="20.8" fill="#4d4d4d" stroke="#333" stroke-width="1"/>
<text x="1612" y="380.2" class="mp" style="font-size:17.5px">Granodiorite</text>
<rect x="1582.2" y="389.1" width="20.6" height="20.8" fill="#cfcdb3" stroke="#333" stroke-width="1"/>
<text x="1612" y="406.9" class="mp" style="font-size:17.5px">Sandy gravel</text>
<rect x="1582.2" y="415.9" width="20.6" height="20.8" fill="#7e7e7e" stroke="#333" stroke-width="1"/>
<text x="1612" y="433.6" class="mp" style="font-size:17.5px">Schist</text>
<rect x="1582.2" y="442.6" width="20.6" height="20.8" fill="#87631a" stroke="#333" stroke-width="1"/>
<text x="1612" y="460.3" class="mp" style="font-size:17.5px">Silt</text>
<rect x="1582.2" y="469.4" width="20.6" height="20.8" fill="#2596bd" stroke="#333" stroke-width="1"/>
<text x="1612" y="487.0" class="mp" style="font-size:17.5px">Water</text>
<rect x="1579.8" y="532.7" width="4.2" height="4.2" fill="#ff0000"/>
<text x="1612" y="538.6" class="mp" style="font-size:17.5px" textLength="151" lengthAdjust="spacingAndGlyphs">Tunnel - Alignment</text>
<circle cx="1592.4" cy="561.4" r="12.1" fill="none" stroke="#7b1c8c" stroke-width="2.6"/>
<text x="1612" y="565.4" class="mp" style="font-size:17.5px" textLength="72" lengthAdjust="spacingAndGlyphs">Intercept</text>
</g>
<g id="minimap">
<rect x="1643" y="580.6" width="212.8" height="230" fill="#fff" stroke="#e2e2e2" stroke-width="1"/>
<g clip-path="url(#miniclip)">
<rect x="1659" y="585" width="182" height="212" fill="#d3e6f3"/>
<path d="M1659 585 H1841 V729.5 L1841 729.5 L1832 726 L1818 719.8 L1800 716 L1791.7 713.5 L1784.8 701.4 L1779.6 690.1 L1750 679 L1728.7 671.7 L1718.9 666.8 L1709 655.7 L1695.6 653.9 L1679.6 658.2 L1659 665.6 Z" fill="#d0dbb2"/>
<path d="M1659 585 H1760 C1752 600 1745 615 1735 630 C1725 645 1712 650 1700 650 C1685 652 1670 660 1659 664 Z" fill="#d6d6a6" opacity="0.6"/>
<path d="M1803 600 C1812 612 1822 630 1829 650 L1808 660 C1806 640 1802 622 1796 608 Z" fill="#eef1ea"/>
<path d="M1778 600 C1782 606 1786 612 1790 616 L1783 618 C1780 612 1777 606 1775 601 Z" fill="#eef1ea"/>
<g fill="none" stroke="#cf8a2e" stroke-width="0.9" opacity="0.9">
<polyline points="1659.0,655.2 1662.0,655.0 1665.0,654.6 1668.0,653.9 1671.0,652.8 1674.0,651.3 1677.0,649.5 1680.0,647.6 1683.0,645.9 1686.0,644.3 1689.0,643.0 1692.0,642.1 1695.0,641.6 1698.0,642.4 1701.0,643.6 1704.0,645.0 1707.0,646.2 1710.0,648.2 1713.0,651.8 1716.0,655.0 1719.0,657.8 1722.0,658.5 1725.0,659.0 1728.0,659.6 1731.0,660.1 1734.0,660.8 1737.0,661.8 1740.0,663.3"/>
<polyline points="1659.0,652.4 1662.0,650.8 1665.0,649.0 1668.0,647.0 1671.0,645.0 1674.0,643.2 1677.0,641.8 1680.0,640.8 1683.0,640.4 1686.0,640.3 1689.0,640.4 1692.0,640.5 1695.0,640.5 1698.0,641.1 1701.0,641.6 1704.0,641.7 1707.0,641.5 1710.0,642.0 1713.0,644.5 1716.0,647.0 1719.0,649.7 1722.0,651.0 1725.0,652.6 1728.0,654.6 1731.0,656.6 1734.0,658.5 1737.0,660.5 1740.0,662.2"/>
<polyline points="1659.0,644.4 1662.0,642.8 1665.0,641.4 1668.0,640.5 1671.0,640.0 1674.0,639.7 1677.0,639.6 1680.0,639.4 1683.0,639.3 1686.0,638.8 1689.0,638.0 1692.0,636.8 1695.0,635.3 1698.0,634.5 1701.0,634.0 1704.0,633.6 1707.0,633.5 1710.0,634.8 1713.0,638.5 1716.0,642.5 1719.0,646.6 1722.0,649.1 1725.0,651.4 1728.0,653.5 1731.0,654.9 1734.0,655.8 1737.0,656.3"/>
<polyline points="1659.0,639.9 1662.0,639.7 1665.0,639.6 1668.0,639.3 1671.0,638.8 1674.0,638.0 1677.0,636.8 1680.0,635.2 1683.0,633.6 1686.0,631.9 1689.0,630.2 1692.0,628.7 1695.0,627.5 1698.0,627.7 1701.0,628.5 1704.0,629.6 1707.0,630.9 1710.0,633.3 1713.0,637.4 1716.0,641.2 1719.0,644.6 1722.0,645.8 1725.0,646.7 1728.0,647.4 1731.0,647.6 1734.0,647.7"/>
<polyline points="1659.0,638.7 1662.0,637.7 1665.0,636.3 1668.0,634.6 1671.0,632.7 1674.0,630.7 1677.0,628.8 1680.0,627.1 1683.0,626.1 1686.0,625.4 1689.0,625.2 1692.0,625.2 1695.0,625.3 1698.0,626.3 1701.0,627.4 1704.0,628.2 1707.0,628.6 1710.0,629.5 1713.0,632.2 1716.0,634.6 1719.0,637.0 1722.0,637.7 1725.0,638.8 1728.0,640.2 1731.0,641.6"/>
<polyline points="1659.0,632.1 1662.0,630.1 1665.0,628.2 1668.0,626.7 1671.0,625.5 1674.0,624.7 1677.0,624.3 1680.0,624.1 1683.0,624.2 1686.0,624.3 1689.0,624.0 1692.0,623.5 1695.0,622.5 1698.0,622.1 1701.0,621.7 1704.0,621.2 1707.0,620.7 1710.0,621.4 1713.0,624.4 1716.0,627.8 1719.0,631.5 1722.0,633.8 1725.0,636.2 1728.0,638.6"/>
<polyline points="1659.0,625.3 1662.0,624.6 1665.0,624.2 1668.0,624.1 1671.0,623.9 1674.0,623.6 1677.0,623.0 1680.0,622.1 1683.0,621.0 1686.0,619.5 1689.0,617.9 1692.0,616.1 1695.0,614.5 1698.0,614.1 1701.0,614.2 1704.0,614.8 1707.0,615.7 1710.0,617.9 1713.0,622.2 1716.0,626.5 1719.0,630.5 1722.0,632.3 1725.0,633.8"/>
<polyline points="1659.0,623.9 1662.0,623.5 1665.0,622.8 1668.0,621.7 1671.0,620.2 1674.0,618.4 1677.0,616.4 1680.0,614.5 1683.0,612.9 1686.0,611.6 1689.0,610.7 1692.0,610.2 1695.0,610.0 1698.0,611.0 1701.0,612.4 1704.0,613.6 1707.0,614.6 1710.0,616.2 1713.0,619.4 1716.0,622.3 1719.0,624.7 1722.0,625.3 1725.0,625.9"/>
<polyline points="1659.0,619.7 1662.0,617.8 1665.0,615.8 1668.0,613.9 1671.0,612.1 1674.0,610.6 1677.0,609.6 1680.0,609.0 1683.0,608.9 1686.0,609.0 1689.0,609.1 1692.0,609.1 1695.0,608.7 1698.0,609.0 1701.0,609.1 1704.0,608.9 1707.0,608.4 1710.0,608.9 1713.0,611.4 1716.0,614.2 1719.0,617.3 1722.0,618.9"/>
<polyline points="1659.0,611.6 1662.0,610.3 1665.0,609.4 1668.0,608.9 1671.0,608.6 1674.0,608.4 1677.0,608.3 1680.0,607.9 1683.0,607.5 1686.0,606.6 1689.0,605.4 1692.0,603.9 1695.0,602.1 1698.0,601.4 1701.0,601.0 1704.0,600.9 1707.0,601.2 1710.0,602.9 1713.0,606.9 1716.0,611.2 1719.0,615.4"/>
<polyline points="1659.0,608.6 1662.0,608.5 1665.0,608.2 1668.0,607.7 1671.0,606.9 1674.0,605.6 1677.0,604.0 1680.0,602.2 1683.0,600.5 1686.0,598.8 1689.0,597.3 1692.0,596.1 1695.0,595.3 1698.0,595.9 1701.0,597.0 1704.0,598.3 1707.0,599.7 1710.0,601.8 1713.0,605.7 1716.0,609.1"/>
<polyline points="1659.0,606.6 1662.0,605.2 1665.0,603.5 1668.0,601.6 1671.0,599.5 1674.0,597.6 1677.0,596.0 1680.0,594.7 1683.0,594.1 1686.0,593.8 1689.0,593.8 1692.0,593.9 1695.0,594.0 1698.0,594.8 1701.0,595.6 1704.0,596.0 1707.0,595.9 1710.0,596.6 1713.0,599.1"/>
<polyline points="1659.0,599.0 1662.0,597.1 1665.0,595.6 1668.0,594.4 1671.0,593.6 1674.0,593.2 1677.0,592.9 1680.0,592.8 1683.0,592.9 1686.0,592.6 1689.0,592.1 1692.0,591.1 1695.0,589.8 1698.0,589.1 1701.0,588.6 1704.0,588.1 1707.0,587.8 1710.0,588.9"/>
<polyline points="1659.0,593.5 1662.0,593.1 1665.0,593.0 1668.0,592.8 1671.0,592.5 1674.0,591.9 1677.0,590.9 1680.0,589.6 1683.0,588.1 1686.0,586.5 1689.0,584.7 1692.0,583.1 1695.0,581.7 1698.0,581.6 1701.0,582.2 1704.0,583.1 1707.0,584.3 1710.0,586.7"/>
<polyline points="1659.0,592.4 1662.0,591.7 1665.0,590.6 1668.0,589.1 1671.0,587.3 1674.0,585.3 1677.0,583.3 1680.0,581.5 1683.0,580.2 1686.0,579.3 1689.0,578.8 1692.0,578.6 1695.0,578.7 1698.0,579.8 1701.0,581.0 1704.0,582.0 1707.0,582.6"/>
<circle cx="1668" cy="598" r="6" />
<circle cx="1668" cy="598" r="10" />
<circle cx="1668" cy="598" r="14" />
<circle cx="1668" cy="598" r="18" />
<circle cx="1668" cy="598" r="22" />
<path d="M1700 585 C1710 595 1730 600 1760 590"/><path d="M1725 585 C1735 592 1755 596 1780 588"/>
</g>
<g fill="none" stroke="#d88a20" stroke-width="0.9" stroke-dasharray="2.5 1.5">
<path d="M1745 640 C1760 625 1790 630 1805 650"/><path d="M1752 612 C1770 600 1790 598 1806 588"/><path d="M1825 660 C1832 675 1838 690 1841 700"/><path d="M1740 655 C1750 645 1770 642 1790 650"/>
</g>
<path d="M1780 650 C1790 640 1800 650 1805 660 M1760 660 C1770 650 1780 655 1790 668" fill="none" stroke="#a8c080" stroke-width="0.7"/>
<polyline points="1659,665.6 1679.6,658.2 1695.6,653.9 1709,655.7 1718.9,666.8 1728.7,671.7 1750,679 1779.6,690.1 1784.8,701.4 1791.7,713.5 1800,716 1818,719.8 1832,726 1841,729.5" fill="none" stroke="#2a8fb5" stroke-width="1.1"/>
<g fill="none" stroke="#1f8db0" stroke-width="1">
<polyline points="1681.4,585 1689.4,594.3 1695.6,606.6 1704.2,612.7 1712.8,617.6 1718.9,626.2 1726.3,642.2 1715.2,652 1709,655.7"/>
<polyline points="1773.5,585 1782.2,611.4 1796.9,616.6 1807.3,623.5 1811.6,642.6 1807.3,668.5 1803,692.7"/>
<polyline points="1840.2,585 1829.8,594.1 1830.6,625.3 1826.3,668.5 1826.3,719.9"/><polyline points="1826.3,668.5 1841,661"/>
<line x1="1713.4" y1="585" x2="1713.4" y2="742"/><line x1="1659" y1="593.3" x2="1717.7" y2="593.3"/><line x1="1683.9" y1="671.5" x2="1732" y2="671.5"/>
<line x1="1791.7" y1="585" x2="1791.7" y2="680.6"/><line x1="1745" y1="594.5" x2="1807" y2="594.5"/><line x1="1774.4" y1="672.3" x2="1833" y2="672.3"/>
<line x1="1709.6" y1="749.9" x2="1737.5" y2="749.9"/><line x1="1770.9" y1="749.9" x2="1829.4" y2="749.9"/>
</g>
<polyline points="1659,650.2 1691.9,647.1 1714,652.7 1728.7,661.9 1750,670.5 1779.6,691" fill="none" stroke="#111" stroke-width="1.2" stroke-dasharray="3 2"/>
<path d="M1782 697 C1795 703 1815 706 1841 710 M1786 706 C1800 712 1820 716 1841 718" fill="none" stroke="#111" stroke-width="1" stroke-dasharray="3 2"/>
<polyline points="1779.6,691 1802,692.7 1824.6,697.9 1841,700.5" fill="none" stroke="#f28a00" stroke-width="2.4"/>
<path d="M1780.5 691 C1773 690 1766 695 1764 703 C1762 712 1761 720 1760 730 C1757 752 1752 772 1746 797" fill="none" stroke="#f2960f" stroke-width="1.7" stroke-dasharray="4 3"/>
<path d="M1786 703 C1790 710 1795 714 1800 716 L1793 718 C1788 712 1785 708 1784 704 Z" fill="#fff"/>
<g fill="#111"><rect x="1798.5" y="680.5" width="3.2" height="3.2"/><rect x="1807.5" y="680" width="3.2" height="3.2"/><rect x="1805.2" y="686" width="3.2" height="3.2"/><rect x="1812.3" y="687.5" width="3.2" height="3.2"/><rect x="1800.5" y="689.8" width="3.2" height="3.2"/></g>
<rect x="1659" y="585" width="1.6" height="212" fill="#666"/>
<rect x="1660" y="624.4" width="4" height="0.9" fill="#333"/>
<text x="1666.5" y="627.9" style="font-size:8.6px;fill:#222" textLength="34.5" lengthAdjust="spacingAndGlyphs">4892575N</text>
<rect x="1660" y="685.7" width="4" height="0.9" fill="#333"/>
<text x="1666.5" y="689.2" style="font-size:8.6px;fill:#222" textLength="34.5" lengthAdjust="spacingAndGlyphs">4891775N</text>
<rect x="1660" y="747.5" width="4" height="0.9" fill="#333"/>
<text x="1666.5" y="751.0" style="font-size:8.6px;fill:#222" textLength="34.5" lengthAdjust="spacingAndGlyphs">4890975N</text>
<text x="1745.8" y="602.8" style="font-size:10.4px;fill:#222" textLength="64.6" lengthAdjust="spacingAndGlyphs">Scale: 1:55,000</text>
<text x="1733.3" y="618.2" style="font-size:9.4px;fill:#222">0m</text>
<text x="1802.9" y="618.2" style="font-size:9.4px;fill:#222">1000m</text>
<rect x="1740" y="622" width="76.8" height="10" fill="#fff" stroke="#666" stroke-width="0.7"/>
<rect x="1740" y="622" width="19.2" height="10" fill="#000"/><rect x="1778.4" y="622" width="19.2" height="10" fill="#000"/>
<line x1="1757" y1="747.7" x2="1763.1" y2="726.8" stroke="#cc00cc" stroke-width="2.4"/>
<text x="1741.4" y="757.2" style="font-size:21px;font-weight:bold;fill:#cc00cc" textLength="13" lengthAdjust="spacingAndGlyphs">A</text>
<text x="1765.2" y="735.6" style="font-size:20px;font-weight:bold;fill:#cc00cc" textLength="12.5" lengthAdjust="spacingAndGlyphs">B</text>
<text x="1732.6" y="732.3" style="font-size:8.4px;fill:#111" textLength="24.7" lengthAdjust="spacingAndGlyphs">Section</text>
</g></g>

<!-- ================= TREE PANEL ================= -->
<rect x="0.5" y="71.5" width="568" height="427" fill="#ffffff" stroke="#bcbcbc" stroke-width="1.2"/>
<rect x="546" y="72" width="1" height="426" fill="#e2e2e2"/>
<rect x="550" y="171" width="15" height="190" rx="7.5" fill="#9b9b9b"/>

<!-- selection -->
<rect x="1.2" y="240" width="544.8" height="42" fill="#b3e4f9"/>
<rect x="133" y="245.8" width="205.6" height="28.4" fill="none" stroke="#a6abad" stroke-width="1.3"/>
<!-- chevrons -->
<g fill="none" stroke="#333" stroke-width="1.6">
  <polyline points="10,88.6 19,97.4 28,88.6"/>
  <polyline points="40,172.6 49,181.4 58,172.6"/>
  <polyline points="70,214.4 79,223.2 88,214.4"/>
</g>
<!-- folders -->
<g fill="#fff" stroke="#8f8f8f" stroke-width="1.3">
  <path id="fold" d="M51.5 83.6 H57.8 L61 86.8 H71.4 a2 2 0 0 1 2 2 V101.4 a2 2 0 0 1 -2 2 H51.5 a2 2 0 0 1 -2 -2 V85.6 a2 2 0 0 1 2 -2 Z"/>
  <use href="#fold" x="59.6" y="125.4"/>
  <use href="#fold" x="59.6" y="209.4"/>
  <use href="#fold" x="59.6" y="251.4"/>
  <use href="#fold" x="59.6" y="293.4"/>
</g>
<!-- plan view layout icon -->
<path d="M83.4 123.8 L99.8 140 H83.4 Z" fill="#3b86c0" stroke="#9a9a9a" stroke-width="1"/>
<path d="M86.4 131.2 L92.6 137.2 H86.4 Z" fill="#fff" stroke="#9a9a9a" stroke-width="0.9"/>
<rect x="79.6" y="140.6" width="24" height="6.8" fill="#fff" stroke="#9a9a9a" stroke-width="1.2"/>
<g stroke="#9a9a9a" stroke-width="0.9">
  <line x1="84" y1="141" x2="84" y2="144"/><line x1="87" y1="141" x2="87" y2="143"/><line x1="90" y1="141" x2="90" y2="144.5"/><line x1="93" y1="141" x2="93" y2="143"/><line x1="96" y1="141" x2="96" y2="144"/><line x1="99" y1="141" x2="99" y2="143"/>
</g>
<!-- strip view icon -->
<rect x="79.1" y="165" width="25" height="25" fill="#fff" stroke="#c3c3c3" stroke-width="1.5"/>
<rect x="80.2" y="168.9" width="22.8" height="1.6" fill="#5cc2e4"/>
<rect x="80.2" y="184.2" width="22.8" height="1.6" fill="#5cc2e4"/>
<rect x="80.2" y="176.5" width="22.8" height="1.8" fill="#1f5a7f"/>
<g fill="#e8302f">
  <circle cx="83" cy="168.4" r="1.9"/><circle cx="99.9" cy="171.3" r="1.9"/><circle cx="91.6" cy="174.2" r="1.9"/><circle cx="83.9" cy="181.1" r="1.9"/><circle cx="95.8" cy="186.2" r="1.9"/>
</g>
<!-- map icon -->
<rect x="140.2" y="254.6" width="22.8" height="18.4" rx="1.8" fill="#a3dff0" stroke="#9c9c9c" stroke-width="1.6"/>
<path d="M141 267.4 L148.1 262.3 L157.6 272.4 H141 Z" fill="#9cc9b0" stroke="#9c9c9c" stroke-width="1"/>
<path d="M155.8 268.4 L159.8 264.6 L162.4 267 V272.4 H159.6 Z" fill="#9cc9b0" stroke="#9c9c9c" stroke-width="1"/>
<circle cx="156" cy="260.1" r="1.7" fill="#fff" stroke="#9c9c9c" stroke-width="0.9"/>
<line x1="143.3" y1="249.6" x2="160" y2="249.6" stroke="#9c9c9c" stroke-width="1.1"/>
<line x1="141" y1="252.2" x2="161.8" y2="252.2" stroke="#9c9c9c" stroke-width="1.1"/>
<!-- north arrow icon -->
<text x="110.6" y="426.6" style="font-size:10.6px;font-weight:bold;fill:#215b7f">N</text>
<path d="M125.8 417.4 L131.4 428.7 H120.8 Z" fill="#215b7f"/>
<path d="M120.8 431.8 H131.4 L125.8 441.1 Z" fill="#999"/>
<!-- geology icon -->
<g fill="#fff" stroke="#9d9d9d" stroke-width="1.6">
  <rect x="110.4" y="460.6" width="22.2" height="21.6"/>
</g>
<g stroke="#9d9d9d" stroke-width="1.6">
  <line x1="117.8" y1="460.6" x2="117.8" y2="482.2"/><line x1="125.2" y1="460.6" x2="125.2" y2="482.2"/>
  <line x1="110.4" y1="466" x2="132.6" y2="466"/><line x1="110.4" y1="471.4" x2="132.6" y2="471.4"/><line x1="110.4" y1="476.8" x2="132.6" y2="476.8"/>
</g>
<rect x="121" y="471" width="13" height="13" fill="#fff"/>
<circle cx="127.8" cy="477.6" r="5.9" fill="#215b7f"/>
<path d="M127.8 473.6 V478.6 M125.6 476.6 L127.8 478.8 L130 476.6 M124.8 480.6 H130.8" fill="none" stroke="#fff" stroke-width="1.1"/>
<!-- tree labels -->
<g class="ui" style="font-size:17.6px">
  <text x="79.6" y="99.4">Plan Views</text>
  <text x="109.3" y="141">Plan View Layout</text>
  <text x="109.3" y="182.6">Strip View</text>
  <text x="139.5" y="224.8">Maps</text>
  <text x="169.5" y="266.4">Lake Aura map</text>
  <text x="139.3" y="308.6">Lines</text>
  <text x="139.3" y="350.4">Points</text>
  <text x="139.3" y="392.4">Structural Data</text>
  <text x="139.5" y="434.8" textLength="96" lengthAdjust="spacingAndGlyphs">North Arrow</text>
  <text x="139.3" y="476.6" textLength="155" lengthAdjust="spacingAndGlyphs">Lake_Aura_Geology</text>
</g>

<!-- splitter -->
<rect x="0" y="499" width="570" height="8" fill="#f7f7f7"/>
<!-- PROPERTIES PANEL -->
<rect x="0.5" y="507.5" width="568" height="300" fill="#f9f9f9" stroke="#bcbcbc" stroke-width="1.2"/>
<!-- grips -->
<g fill="#8a8a8a">
  <rect x="270.5" y="501.2" width="30.5" height="4.6" fill="#bcbcbc"/>
</g>
<g stroke="#5f5f5f" stroke-width="1" stroke-dasharray="1 1.3">
  <line x1="271" y1="503.5" x2="301" y2="503.5" stroke-width="4" />
  <line x1="573.8" y1="668" x2="573.8" y2="699" stroke-width="4"/>
</g>
<text x="13.5" y="537.5" class="ui" style="font-size:16.8px;font-weight:bold;fill:#262626">Lake Aura map</text>
<rect x="43.2" y="616.4" width="17.8" height="18.2" fill="#27587d"/>
<polyline points="47.6,625.6 51.2,629.4 57,620.8" fill="none" stroke="#fff" stroke-width="1.5"/>
<text x="67.3" y="631.7" class="ui" style="font-size:17.6px">Visible</text>
<rect x="68" y="633.4" width="10.6" height="1.2" fill="#2e2e2e"/>
<text x="135" y="631.7" class="ui" style="font-size:17.6px">Opacity:</text>
<text x="490.8" y="615.2" class="ui" style="font-size:17.6px">1.00</text>
<line x1="226" y1="642" x2="512" y2="642" stroke="#234a66" stroke-width="9.2" stroke-linecap="round"/>
<circle cx="515.6" cy="642" r="9.2" fill="#234a66"/>
<rect x="55.6" y="670" width="17" height="16.8" fill="#fff" stroke="#c9c9c9" stroke-width="1.3"/>
<text x="79" y="683.6" class="ui" style="font-size:17.6px">Show in legend</text>
<rect x="79.5" y="685.4" width="10.6" height="1.2" fill="#2e2e2e"/>
<text x="43.7" y="731.6" class="ui" style="font-size:17.6px">Description:</text>
<rect x="151.6" y="717.8" width="17" height="16.8" fill="#fff" stroke="#c9c9c9" stroke-width="1.3"/>
<text x="175.3" y="731.6" class="ui" style="font-size:17.6px">Edit</text>
<rect x="175.6" y="733.4" width="9.4" height="1.2" fill="#2e2e2e"/>
<rect x="55.8" y="750.6" width="469.4" height="34.6" fill="#fff" stroke="#ececec" stroke-width="1"/>
<text x="69.3" y="774.5" style="font-size:17.6px;fill:#b5b9bf">Lake Aura map</text>

<g filter="url(#ashadow)">
<line x1="462.3" y1="554.5" x2="893" y2="375.8" stroke="#ff5233" stroke-width="6.6"/>
<polygon points="910,367.7 887.2,366 895.3,384.9" fill="#ff5233"/>
</g>
</svg>
</body></html>
